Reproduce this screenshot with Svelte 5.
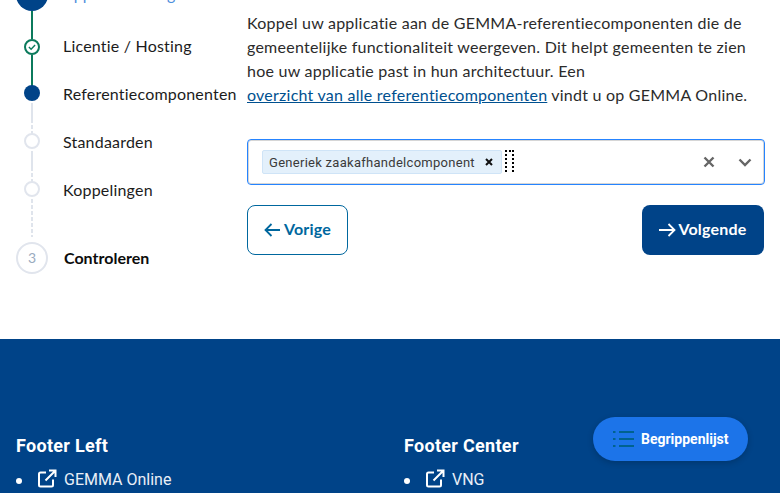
<script>
  const sub = [
    { label: 'Licentie / Hosting', state: 'done' },
    { label: 'Referentiecomponenten', state: 'current' },
    { label: 'Standaarden', state: 'todo' },
    { label: 'Koppelingen', state: 'todo' }
  ];
</script>

<div class="page">
  <main class="main">
    <aside class="steps">
      <div class="step head">
        <div class="big active"></div>
        <span class="head-title">Applicatie Vastgoed</span>
      </div>
      {#each sub as s, i}
        <div class="step sub {s.state}" class:last={i === sub.length - 1}>
          <div class="marker">
            {#if s.state === 'done'}
              <svg width="16" height="16" viewBox="0 0 16 16" fill="none">
                <circle cx="8" cy="8" r="7" stroke="#0b7a5c" stroke-width="2" />
                <path d="M4.900 8.100l2.200 2.200 4-4.300" stroke="#0b7a5c" stroke-width="1.400" />
              </svg>
            {:else}
              <span class="dot"></span>
            {/if}
          </div>
          <span class="label">{s.label}</span>
        </div>
      {/each}
      <div class="step head end">
        <div class="big num">3</div>
        <span class="end-title">Controleren</span>
      </div>
    </aside>

    <section class="content">
      <p class="intro">
        Koppel uw applicatie aan de GEMMA-referentiecomponenten die de gemeentelijke functionaliteit weergeven. Dit helpt gemeenten te zien hoe uw applicatie past in hun architectuur. Een<br />
        <a href="#x">overzicht van alle referentiecomponenten</a> vindt u op GEMMA Online.
      </p>

      <div class="select">
        <div class="values">
          <span class="chip">
            <span class="chip-text">Generiek zaakafhandelcomponent</span>
            <svg class="chip-x" width="8" height="8" viewBox="0 0 8 8"><path d="M1 1l6 6M7 1l-6 6" stroke="#111" stroke-width="2" /></svg>
          </span>
          <span class="cursor"></span>
        </div>
        <div class="indicators">
          <svg width="12" height="12" viewBox="0 0 12 12"><path d="M1.500 1.500l9 9M10.500 1.500l-9 9" stroke="#666" stroke-width="2.400" /></svg>
          <svg width="14" height="9" viewBox="0 0 14 9" fill="none"><path d="M1.500 1.500L7 7l5.500-5.500" stroke="#666" stroke-width="2.400" /></svg>
        </div>
      </div>

      <div class="actions">
        <button class="btn prev">
          <svg width="16" height="14" viewBox="0 0 16 14" fill="none"><path d="M16 7H1.500M7.500 1L1.500 7l6 6" stroke="#00679e" stroke-width="1.800" /></svg>
          <span>Vorige</span>
        </button>
        <button class="btn next">
          <svg width="17" height="14" viewBox="0 0 17 14" fill="none"><path d="M0 7h15.500M9.500 1l6 6-6 6" stroke="#fff" stroke-width="1.800" /></svg>
          <span>Volgende</span>
        </button>
      </div>
    </section>
  </main>

  <footer class="footer">
    <div class="col">
      <h3>Footer Left</h3>
      <ul>
        <li>
          <svg class="ext" width="20" height="20" viewBox="0 0 20 20" fill="none"><path d="M9 3.500H3.500A1.500 1.500 0 0 0 2 5v11a1.500 1.500 0 0 0 1.500 1.500h11A1.500 1.500 0 0 0 16 16v-5.500M8.500 11.500L18 2M12 1.500h6.500V8" stroke="#fff" stroke-width="2" /></svg>
          <span>GEMMA Online</span>
        </li>
      </ul>
    </div>
    <div class="col">
      <h3>Footer Center</h3>
      <ul>
        <li>
          <svg class="ext" width="20" height="20" viewBox="0 0 20 20" fill="none"><path d="M9 3.500H3.500A1.500 1.500 0 0 0 2 5v11a1.500 1.500 0 0 0 1.500 1.500h11A1.500 1.500 0 0 0 16 16v-5.500M8.500 11.500L18 2M12 1.500h6.500V8" stroke="#fff" stroke-width="2" /></svg>
          <span>VNG</span>
        </li>
      </ul>
    </div>
  </footer>

  <button class="fab">
    <svg width="21" height="18" viewBox="0 0 21 18" fill="none">
      <path d="M6 2h15M6 9h15M6 16h15" stroke="#00628f" stroke-width="2" />
      <path d="M0 2h2.500M0 9h2.500M0 16h2.500" stroke="#00628f" stroke-width="2" />
    </svg>
    <span>Begrippenlijst</span>
  </button>
</div>

<style>
  :global(body) {
    margin: 0;
    background: #fff;
  }
  .page {
    position: relative;
    width: 780px;
    height: 493px;
    overflow: hidden;
    font-family: Lato, sans-serif;
  }
  .main {
    display: flex;
    height: 339px;
    box-sizing: border-box;
  }
  .steps {
    width: 247px;
    flex: none;
    margin-top: -21px;
    padding-left: 16px;
    box-sizing: border-box;
  }
  .step {
    display: flex;
    align-items: center;
  }
  .big {
    width: 32px;
    height: 32px;
    border-radius: 50%;
    box-sizing: border-box;
    flex: none;
    display: flex;
    align-items: center;
    justify-content: center;
  }
  .big.active {
    background: #004388;
  }
  .head-title {
    margin: 0 0 4px 15px;
    font-size: 16px;
    color: #4f8fdc;
    white-space: nowrap;
  }
  .head {
    height: 32px;
  }
  .sub {
    height: 48px;
    position: relative;
    color: #1c1c1c;
  }
  .sub:nth-child(2) {
    margin-top: 12px;
  }
  .marker {
    width: 32px;
    height: 16px;
    display: flex;
    justify-content: center;
    align-items: center;
    flex: none;
    position: relative;
    z-index: 1;
  }
  .current .marker,
  .todo .marker {
    margin-bottom: 4px;
  }
  .sub::before,
  .sub::after {
    content: '';
    position: absolute;
    left: 15px;
    width: 2px;
  }
  .sub::before {
    top: -12px;
    height: 28px;
  }
  .sub::after {
    top: 32px;
    height: 16px;
  }
  .done::before,
  .done::after,
  .current::before {
    background: #0b7a5c;
  }
  .current::after,
  .todo::before,
  .todo::after {
    background: repeating-linear-gradient(to bottom, #dfe4ec 0 4px, transparent 4px 6px);
  }
  .sub.last::after {
    height: 38px;
  }
  .dot {
    width: 16px;
    height: 16px;
    border-radius: 50%;
    box-sizing: border-box;
    background: #fff;
  }
  .current .dot {
    background: #004388;
  }
  .todo .dot {
    border: 2px solid #e1e5ed;
  }
  .label {
    margin: 0 0 4px 15px;
    font-size: 16px;
    white-space: nowrap;
    letter-spacing: 0.2px;
  }
  .end {
    margin-top: 27px;
  }
  .big.num {
    border: 2px solid #e1e5ed;
    font-size: 14px;
    color: #9aabc0;
    padding-bottom: 2px;
  }
  .end-title {
    margin: 0 0 2px 16px;
    font-size: 16px;
    font-weight: 700;
    color: #0c0c0c;
  }
  .content {
    width: 517px;
    flex: none;
    padding-top: 11px;
  }
  .intro {
    margin: 0 0 32px;
    font-size: 16px;
    line-height: 24px;
    color: #2b2b2b;
    letter-spacing: 0.24px;
  }
  .intro a {
    color: #00508f;
    text-decoration: underline;
  }
  .select {
    width: 518px;
    height: 46px;
    box-sizing: border-box;
    border: 1px solid #2684ff;
    border-radius: 4px;
    box-shadow: inset 0 0 0 1px #d6d6d6;
    display: flex;
    align-items: center;
    justify-content: space-between;
    padding: 0 12px 0 14px;
  }
  .values {
    display: flex;
    align-items: center;
  }
  .chip {
    display: inline-flex;
    align-items: center;
    height: 24px;
    box-sizing: border-box;
    background: #e3f0fb;
    border: 1px solid #cfe4f7;
    border-radius: 2px;
    padding: 0 8px 0 6px;
    font-family: Roboto, sans-serif;
    font-size: 13px;
    color: #3a3a3a;
    letter-spacing: 0.28px;
  }
  .chip-x {
    margin-left: 10px;
  }
  .cursor {
    width: 9px;
    height: 24px;
    margin-left: 3px;
    background-image:
      repeating-linear-gradient(to bottom, #000 0 2px, transparent 2px 4px),
      repeating-linear-gradient(to bottom, #000 0 2px, transparent 2px 4px),
      repeating-linear-gradient(to right, #000 0 2px, transparent 2px 4px);
    background-size: 2px 100%, 2px 100%, 100% 2px;
    background-position: left top, right top, left top;
    background-repeat: no-repeat;
  }
  .indicators {
    display: flex;
    align-items: center;
    gap: 23px;
  }
  .actions {
    display: flex;
    justify-content: space-between;
    margin-top: 20px;
  }
  .btn {
    height: 50px;
    border-radius: 8px;
    display: inline-flex;
    align-items: center;
    justify-content: center;
    font-family: Lato, sans-serif;
    font-size: 16px;
    font-weight: 700;
    letter-spacing: 0.2px;
    padding: 0;
    box-sizing: border-box;
  }
  .btn span {
    margin-bottom: 3px;
  }
  .prev {
    width: 101px;
    gap: 4px;
    background: #fff;
    color: #00679e;
    border: 1px solid #00679e;
  }
  .next {
    width: 122px;
    gap: 2px;
    background: #004388;
    color: #fff;
    border: none;
  }
  .footer {
    background: #004388;
    height: 154px;
    box-sizing: border-box;
    padding: 95px 16px 0;
    display: grid;
    grid-template-columns: 388px 1fr;
    color: #fff;
    font-family: Roboto, sans-serif;
  }
  .footer h3 {
    margin: 0 0 11px;
    font-size: 18px;
    line-height: 24px;
    font-weight: 700;
    letter-spacing: 0.3px;
  }
  .footer ul {
    margin: 0;
    padding: 0;
    list-style: none;
  }
  .footer li {
    display: flex;
    align-items: center;
    height: 20px;
    font-size: 16px;
    color: #e9eff7;
    position: relative;
    padding-left: 21px;
  }
  .footer li::before {
    content: '';
    position: absolute;
    left: 0;
    top: 9px;
    width: 6px;
    height: 6px;
    border-radius: 50%;
    background: #fff;
  }
  .ext {
    margin-right: 7px;
  }
  .fab {
    position: absolute;
    left: 593px;
    top: 417px;
    width: 155px;
    height: 44px;
    border-radius: 22px;
    border: none;
    background: #1c74e9;
    color: #fff;
    font-family: Roboto, sans-serif;
    font-size: 14px;
    font-weight: 700;
    display: flex;
    align-items: center;
    gap: 7px;
    padding: 0 0 0 20px;
    box-sizing: border-box;
    box-shadow: 0 2px 6px rgba(0, 0, 0, 0.2);
  }
</style>
